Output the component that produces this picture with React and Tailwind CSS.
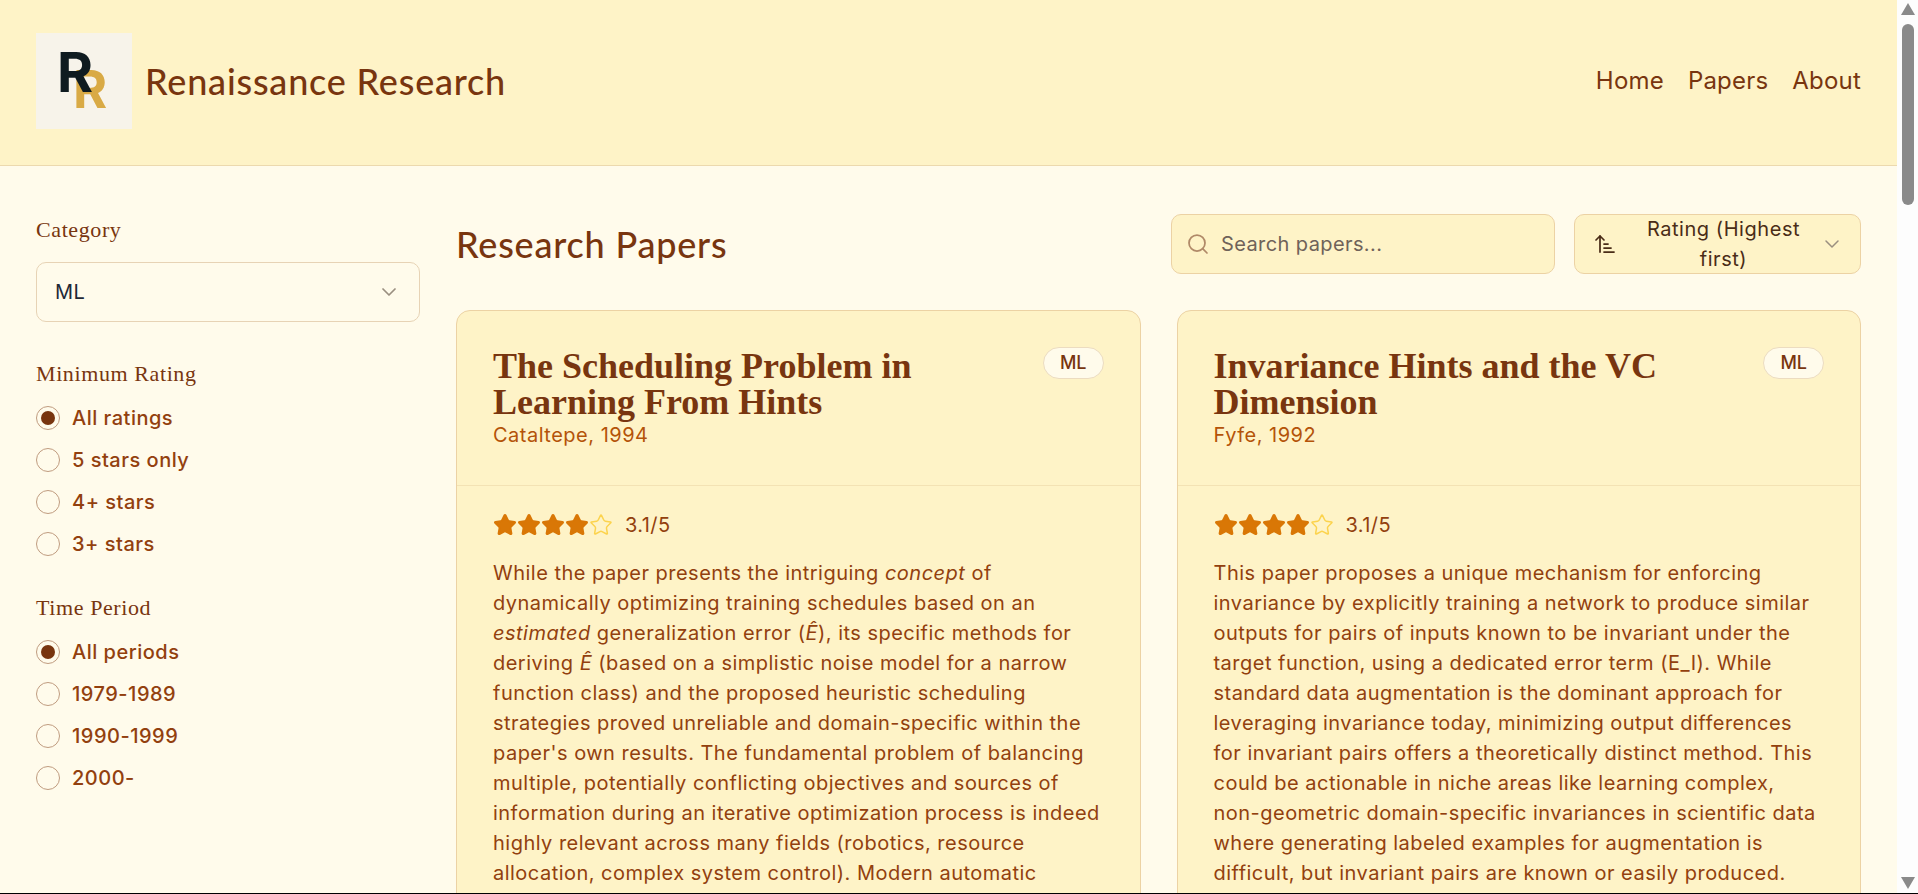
import React from 'react';
import { ArrowUpNarrowWide, ChevronDown, Search, Star } from 'lucide-react';

const PAPERS = [
  {
    title: 'The Scheduling Problem in Learning From Hints',
    author: 'Cataltepe, 1994',
    body: (
      <>
        While the paper presents the intriguing <em>concept</em> of dynamically optimizing training schedules based on an{' '}
        <em>estimated</em> generalization error (<em>Ê</em>), its specific methods for deriving <em>Ê</em> (based on a simplistic
        noise model for a narrow function class) and the proposed heuristic scheduling strategies proved unreliable and
        domain-specific within the paper's own results. The fundamental problem of balancing multiple, potentially conflicting
        objectives and sources of information during an iterative optimization process is indeed highly relevant across many
        fields (robotics, resource allocation, complex system control). Modern automatic
      </>
    ),
  },
  {
    title: 'Invariance Hints and the VC Dimension',
    author: 'Fyfe, 1992',
    body: (
      <>
        This paper proposes a unique mechanism for enforcing invariance by explicitly training a network to produce similar
        outputs for pairs of inputs known to be invariant under the target function, using a dedicated error term (E_I). While
        standard data augmentation is the dominant approach for leveraging invariance today, minimizing output differences
        <br />
        for invariant pairs offers a theoretically distinct method. This could be actionable in niche areas like learning complex,
        non-geometric domain-specific invariances in scientific data where generating labeled examples for augmentation is
        difficult, but invariant pairs are known or easily produced.
      </>
    ),
  },
];

function RadioRow({ label, checked }) {
  return (
    <div className="flex items-center gap-3 h-[30px]">
      <span className="w-6 h-6 rounded-full border border-[#c09c80] flex items-center justify-center bg-[#fffbeb]">
        {checked && <span className="w-3.5 h-3.5 rounded-full bg-[#78350f]"></span>}
      </span>
      <span className="text-xl leading-[30px] font-medium tracking-[0.5px] text-[#92400e]">{label}</span>
    </div>
  );
}

function FilterLabel({ children }) {
  return <div className="font-['Liberation_Serif',serif] text-[22px] leading-[30px] tracking-[0.6px] text-[#78350f]">{children}</div>;
}

function Sidebar() {
  return (
    <aside className="w-[384px] shrink-0 pt-px">
      <FilterLabel>Category</FilterLabel>
      <div className="mt-[17px] h-[60px] rounded-[10px] border border-[#e7d3b5] px-[18px] flex items-center justify-between">
        <span className="text-xl tracking-[0.4px] text-[#1f2937]">ML</span>
        <ChevronDown size={24} strokeWidth={1.75} className="text-[#9a8f80]" />
      </div>

      <div className="mt-[37px]">
        <FilterLabel>Minimum Rating</FilterLabel>
      </div>
      <div className="mt-3.5 flex flex-col gap-3">
        <RadioRow label="All ratings" checked />
        <RadioRow label="5 stars only" />
        <RadioRow label="4+ stars" />
        <RadioRow label="3+ stars" />
      </div>

      <div className="mt-[34px]">
        <FilterLabel>Time Period</FilterLabel>
      </div>
      <div className="mt-3.5 flex flex-col gap-3">
        <RadioRow label="All periods" checked />
        <RadioRow label="1979-1989" />
        <RadioRow label="1990-1999" />
        <RadioRow label="2000-" />
      </div>
    </aside>
  );
}

function Stars() {
  return (
    <div className="flex">
      {[0, 1, 2, 3].map((i) => (
        <Star key={i} size={24} className="text-[#d97706] fill-[#d97706]" />
      ))}
      <Star size={24} strokeWidth={1.5} className="text-[#fcd34d]" />
    </div>
  );
}

function PaperCard({ paper }) {
  return (
    <article className="rounded-[14px] border border-[#ecd2a4] bg-[#fef3c7]">
      <div className="px-9 pt-[37px] pb-[35px] border-b border-[#f3e2b4] flex justify-between items-start gap-4">
        <div className="min-w-0">
          <h2 className="font-['Liberation_Serif',serif] font-bold text-4xl leading-9 text-[#78350f]">{paper.title}</h2>
          <div className="text-xl leading-[30px] tracking-[0.5px] text-[#b45309]">{paper.author}</div>
        </div>
        <span className="shrink-0 -mt-px h-8 rounded-full border border-[#ecdcc0] bg-[#fffbeb] px-4 flex items-center text-lg font-medium text-[#78350f]">
          ML
        </span>
      </div>
      <div className="px-9 pt-6 pb-9">
        <div className="flex items-center gap-3 h-[30px] mb-[18px]">
          <Stars />
          <span className="text-xl tracking-[0.4px] text-[#92400e]">3.1/5</span>
        </div>
        <p className="text-xl leading-[30px] tracking-[0.48px] text-[#92400e]">{paper.body}</p>
      </div>
    </article>
  );
}

function FakeScrollbar() {
  return (
    <div className="w-[21px] shrink-0 bg-[#fdfdfd] flex flex-col items-center pt-[3px] pb-1">
      <svg width="14" height="12" viewBox="0 0 14 12"><path d="M7 0 L14 12 L0 12 Z" fill="#8a8a8a" /></svg>
      <div className="w-3 h-[181px] mt-[9px] rounded-full bg-[#8a8a8a]"></div>
      <svg className="mt-auto" width="14" height="12" viewBox="0 0 14 12"><path d="M0 0 L14 0 L7 12 Z" fill="#8a8a8a" /></svg>
    </div>
  );
}

export default function App() {
  return (
    <div className="h-screen flex overflow-hidden border-b border-black bg-[#fffbeb] font-['Inter',sans-serif]">
      <div className="flex-1 min-w-0 overflow-hidden">
        <header className="h-[166px] border-b border-[#ecd9ae] bg-[#fef3c7] px-9 pb-[3px] flex items-center justify-between">
          <div className="flex items-center gap-[13px]">
            <svg width="96" height="96" viewBox="0 0 96 96" className="bg-[#f7f3ea]">
              <text x="37" y="75" fontFamily="Inter" fontWeight="700" fontSize="52" fill="#d9aa45">R</text>
              <text x="21" y="59" fontFamily="Inter" fontWeight="700" fontSize="55" fill="#0f1b20">R</text>
            </svg>
            <span className="font-['Lato',sans-serif] font-medium text-4xl tracking-[0.8px] text-[#78350f]">Renaissance Research</span>
          </div>
          <nav className="flex gap-6 text-2xl tracking-[0.2px] text-[#78350f]">
            <span>Home</span>
            <span>Papers</span>
            <span>About</span>
          </nav>
        </header>

        <div className="flex gap-9 px-9 pt-12">
          <Sidebar />
          <main className="flex-1 min-w-0">
            <div className="h-[60px] mb-9 flex items-center">
              <h1 className="flex-1 font-['Lato',sans-serif] font-medium text-4xl tracking-[0.8px] text-[#78350f]">Research Papers</h1>
              <div className="w-[384px] h-[60px] rounded-[10px] border border-[#ecd2a4] bg-[#fef3c7] px-3.5 flex items-center gap-[11px]">
                <Search size={24} strokeWidth={1.75} className="text-[#b08968]" />
                <span className="text-xl tracking-[0.4px] text-[#6f6259]">Search papers...</span>
              </div>
              <div className="ml-[19px] w-[287px] h-[60px] rounded-[10px] border border-[#ecd2a4] bg-[#fef3c7] pl-[18px] pr-4 flex items-center">
                <ArrowUpNarrowWide size={24} strokeWidth={1.75} className="shrink-0 mr-2.5 text-[#4a2c17]" />
                <span className="flex-1 text-center text-xl leading-[30px] tracking-[0.55px] text-[#4a2c17]">Rating (Highest first)</span>
                <ChevronDown size={24} strokeWidth={1.5} className="shrink-0 text-[#9a8f80]" />
              </div>
            </div>
            <div className="grid grid-cols-2 gap-9">
              {PAPERS.map((paper) => (
                <PaperCard key={paper.title} paper={paper} />
              ))}
            </div>
          </main>
        </div>
      </div>
      <FakeScrollbar />
    </div>
  );
}
